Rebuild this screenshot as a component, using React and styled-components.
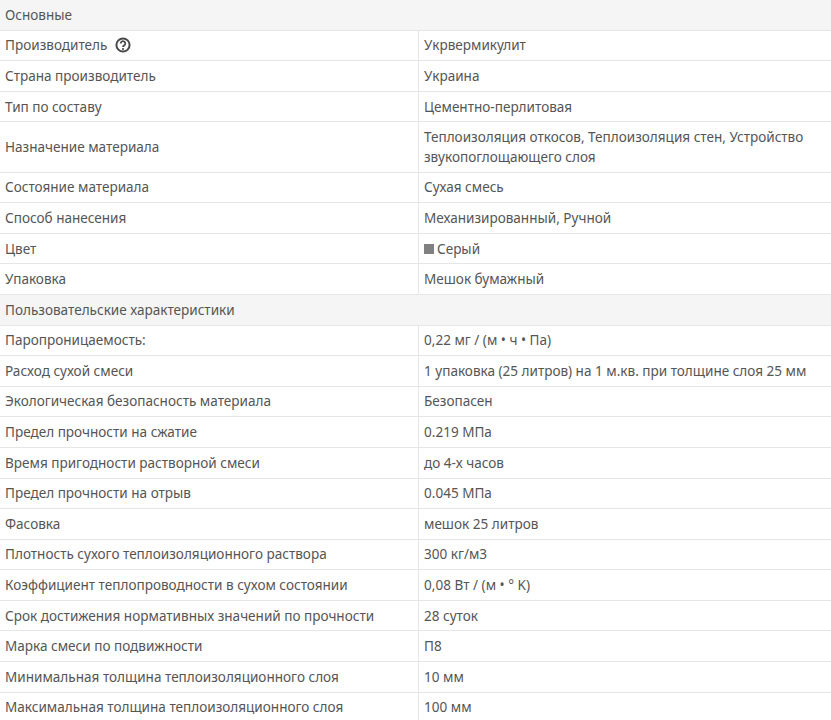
import React from "react";
import styled, { createGlobalStyle } from "styled-components";

const GlobalStyle = createGlobalStyle`
  html, body {
    margin: 0;
    padding: 0;
    background: #fff;
    overflow: hidden;
  }
`;

const Table = styled.table`
  width: 831px;
  table-layout: fixed;
  border-collapse: collapse;
  font-family: "Noto Sans", "Open Sans", sans-serif;
  font-size: 13.55px;
  line-height: 19.6px;
  color: #555;
`;

const SectionCell = styled.td`
  padding: 5.75px 5px 4.25px;
  background: #f5f5f5;
  border-bottom: 1px solid #e6e6e6;
`;

const NameCell = styled.td`
  padding: 5.75px 5px 4.25px;
  border-bottom: 1px solid #e6e6e6;
  border-right: 1px solid #e6e6e6;
  vertical-align: middle;
`;

const ValueCell = styled.td`
  padding: 5.75px 5px 4.25px 5.5px;
  border-bottom: 1px solid #e6e6e6;
  vertical-align: middle;
`;

const HelpIcon = styled.svg`
  width: 16px;
  height: 16px;
  margin-left: 8px;
  vertical-align: -3px;
`;

const Swatch = styled.span`
  display: inline-block;
  width: 10px;
  height: 10px;
  margin-right: 3px;
  background: ${(p) => p.$color};
`;

const Help = () => (
  <HelpIcon viewBox="0 0 16 16" fill="none" stroke="#4a4a4a">
    <circle cx="8" cy="8" r="6.6" strokeWidth="2" />
    <path d="M5.7 6.5a2.3 2.3 0 1 1 3.6 1.9c-.9.5-1.3.9-1.3 1.6" strokeWidth="1.8" />
    <circle cx="8" cy="12" r="1.1" fill="#4a4a4a" stroke="none" />
  </HelpIcon>
);

const sections = [
  {
    title: "Основные",
    rows: [
      ["Производитель", "Укрвермикулит", "help"],
      ["Страна производитель", "Украина"],
      ["Тип по составу", "Цементно-перлитовая"],
      ["Назначение материала", "Теплоизоляция откосов, Теплоизоляция стен, Устройство звукопоглощающего слоя"],
      ["Состояние материала", "Сухая смесь"],
      ["Способ нанесения", "Механизированный, Ручной"],
      ["Цвет", "Серый", "swatch"],
      ["Упаковка", "Мешок бумажный"],
    ],
  },
  {
    title: "Пользовательские характеристики",
    rows: [
      ["Паропроницаемость:", "0,22 мг / (м • ч • Па)"],
      ["Расход сухой смеси", "1 упаковка (25 литров) на 1 м.кв. при толщине слоя 25 мм"],
      ["Экологическая безопасность материала", "Безопасен"],
      ["Предел прочности на сжатие", "0.219 МПа"],
      ["Время пригодности растворной смеси", "до 4-х часов"],
      ["Предел прочности на отрыв", "0.045 МПа"],
      ["Фасовка", "мешок 25 литров"],
      ["Плотность сухого теплоизоляционного раствора", "300 кг/м3"],
      ["Коэффициент теплопроводности в сухом состоянии", "0,08 Вт / (м • ° K)"],
      ["Срок достижения нормативных значений по прочности", "28 суток"],
      ["Марка смеси по подвижности", "П8"],
      ["Минимальная толщина теплоизоляционного слоя", "10 мм"],
      ["Максимальная толщина теплоизоляционного слоя", "100 мм"],
    ],
  },
];

const App = () => (
  <>
    <GlobalStyle />
    <Table>
      <colgroup>
        <col style={{ width: 418 }} />
        <col />
      </colgroup>
      <tbody>
        {sections.map((section) => (
          <React.Fragment key={section.title}>
            <tr>
              <SectionCell colSpan={2}>{section.title}</SectionCell>
            </tr>
            {section.rows.map(([name, value, extra]) => (
              <tr key={name}>
                <NameCell>
                  {name}
                  {extra === "help" && <Help />}
                </NameCell>
                <ValueCell>
                  {extra === "swatch" && <Swatch $color="#808080" />}
                  {value}
                </ValueCell>
              </tr>
            ))}
          </React.Fragment>
        ))}
      </tbody>
    </Table>
  </>
);

export default App;
